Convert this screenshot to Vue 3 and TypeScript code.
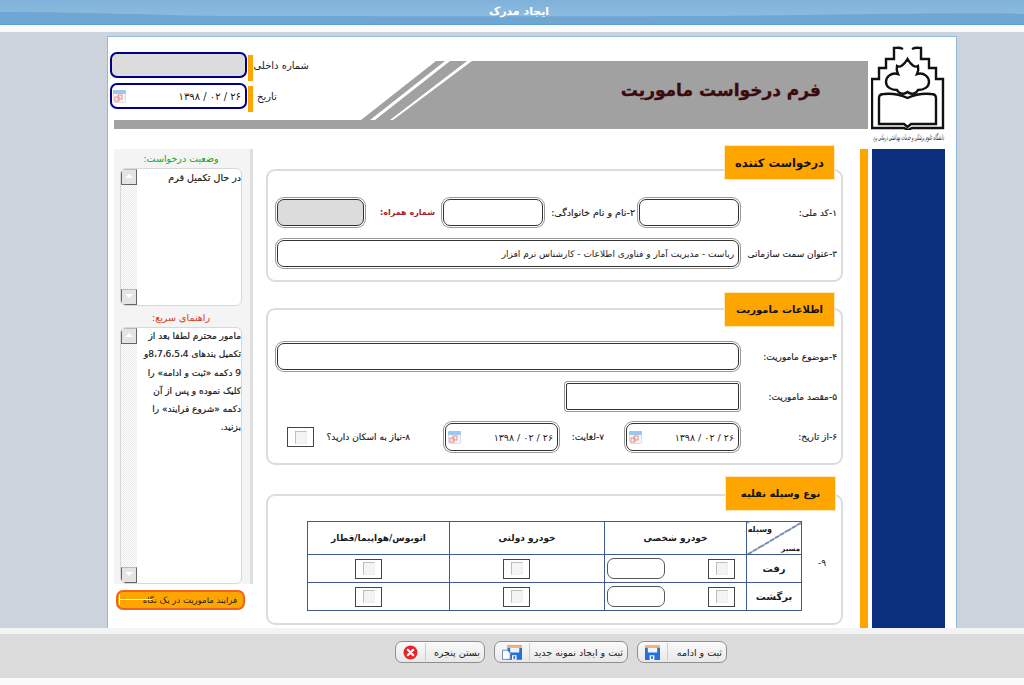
<template>
  <div class="page" dir="rtl">
    <div class="titlebar">
      <svg class="wave" viewBox="0 0 1024 24" preserveAspectRatio="none">
        <path d="M0 12 C100 12 170 16 240 16 C400 16 640 17 800 15 S1000 13 1024 14 V24 H0 Z" fill="#6fa6d2" />
      </svg>
      <span class="title-text">ایجاد مدرک</span>
    </div>
    <div class="gap-strip"></div>

    <div class="desk">
      <div class="panel">
        <div class="head">
          <div class="logo">
            <svg width="74" height="84" viewBox="0 0 74 84" fill="none" stroke="#111" stroke-width="2.4">
              <path d="M32 3 C28 1 26 2 23 2 V13 H15 V22 H8 V33 H1 V82 H33 L37 84 L41 82 H72 V33 H65 V22 H58 V13 H50 V2 C47 2 45 1 41 3" />
              <path d="M36.500 13 C33 19 29 22 26 20 C25 24 26 26 27 28 C20 26 15 31 15 36 C15 41 20 44 26 44 C28 48 33 49 36.500 46 C40 49 45 48 47 44 C53 44 58 41 58 36 C58 31 53 26 46 28 C47 26 48 24 47 20 C44 22 40 19 36.500 13 Z" />
              <path d="M8 78 V52 C8 49 10 48 13 48 C22 47 30 49 36.500 52 C43 49 51 47 60 48 C63 48 65 49 65 52 V78 H40 L36.500 81 L33 78 Z" />
            </svg>
            <div class="logo-caption">دانشگاه علوم پزشکی و خدمات بهداشتی درمانی یزد</div>
          </div>
          <div class="head-main">
            <div class="head-top">
              <div class="banner"><span>فرم درخواست ماموریت</span></div>
              <svg class="slant" width="111" height="59" viewBox="0 0 111 59">
                <path d="M0 59 L75 0 H84 L9 59 Z M14 59 L89 0 H106 L29 59 Z M32 59 L111 0 V59 Z" fill="#a1a1a1" />
              </svg>
              <div class="head-fields">
                <div class="hf-row">
                  <span class="hf-label">شماره داخلی</span>
                  <i class="hf-bar"></i>
                  <div class="hf-input grey"></div>
                </div>
                <div class="hf-row">
                  <span class="hf-label center">تاریخ</span>
                  <i class="hf-bar"></i>
                  <div class="hf-input">
                    <span>{{ today }}</span>
                    <svg class="cal" viewBox="0 0 13 13"><use href="#cal-icon" /></svg>
                  </div>
                </div>
              </div>
            </div>
            <div class="head-strip"></div>
          </div>
        </div>

        <div class="body">
          <div class="navy"></div>
          <div class="orange-bar"></div>

          <div class="main">
            <section class="box box1">
              <h3 class="tab big">درخواست کننده</h3>
              <div class="row r1">
                <label class="l96">۱-کد ملی:</label>
                <input class="inp w104" />
                <label class="l92">۲-نام و نام خانوادگی:</label>
                <input class="inp w104" />
                <label class="mobile">شماره همراه:</label>
                <input class="inp w92 off" />
              </div>
              <div class="row r2">
                <label class="l96">۳-عنوان سمت سازمانی</label>
                <input class="inp w466" value="ریاست - مدیریت آمار و فناوری اطلاعات - کارشناس نرم افزار" />
              </div>
            </section>

            <section class="box box2">
              <h3 class="tab">اطلاعات ماموریت</h3>
              <div class="row r3">
                <label class="l96">۴-موضوع ماموریت:</label>
                <input class="inp w466" />
              </div>
              <div class="row r4">
                <label class="l96">۵-مقصد ماموریت:</label>
                <input class="inp w177 square" />
              </div>
              <div class="row r5">
                <label class="l96">۶-از تاریخ:</label>
                <div class="inp date">
                  <span>{{ today }}</span>
                  <svg class="cal" viewBox="0 0 13 13"><use href="#cal-icon" /></svg>
                </div>
                <label class="l-until">۷-لغایت:</label>
                <div class="inp date">
                  <span>{{ today }}</span>
                  <svg class="cal" viewBox="0 0 13 13"><use href="#cal-icon" /></svg>
                </div>
                <label class="l-stay">۸-نیاز به اسکان دارید؟</label>
                <span class="check"><i></i></span>
              </div>
            </section>

            <section class="box box3">
              <h3 class="tab">نوع وسیله نقلیه</h3>
              <div class="table-row">
                <span class="nine">۹-</span>
                <table class="vehicles">
                  <thead>
                    <tr>
                      <th class="corner">
                        <span class="c-top">وسیله</span>
                        <span class="c-bot">مسیر</span>
                      </th>
                      <th>خودرو شخصی</th>
                      <th>خودرو دولتی</th>
                      <th>اتوبوس/هواپیما/قطار</th>
                    </tr>
                  </thead>
                  <tbody>
                    <tr v-for="r in routes" :key="r">
                      <th class="route">{{ r }}</th>
                      <td>
                        <div class="cell first">
                          <span class="check"><i></i></span>
                          <span class="pill"></span>
                        </div>
                      </td>
                      <td><div class="cell c2"><span class="check"><i></i></span></div></td>
                      <td><div class="cell c3"><span class="check"><i></i></span></div></td>
                    </tr>
                  </tbody>
                </table>
              </div>
            </section>
          </div>

          <aside class="side">
            <div class="side-inner">
              <div class="side-title green">وضعیت درخواست:</div>
              <div class="scrollbox small">
                <div class="sb-text">در حال تکمیل فرم</div>
                <div class="sb-track">
                  <b class="sb-btn up"></b>
                  <b class="sb-btn down"></b>
                </div>
              </div>
              <div class="side-title red">راهنمای سریع:</div>
              <div class="scrollbox large">
                <div class="sb-text guide">
                  <div v-for="l in guide" :key="l">{{ l }}</div>
                </div>
                <div class="sb-track">
                  <b class="sb-btn up"></b>
                  <b class="sb-btn down"></b>
                </div>
              </div>
            </div>
            <button class="flow-btn">فرایند ماموریت در یک نگاه</button>
          </aside>
        </div>
      </div>
    </div>

    <div class="foot-strip"></div>
    <div class="footer">
      <button class="fbtn b1">
        <span>ثبت  و ادامه</span>
        <i class="sep"></i>
        <svg width="15" height="15" viewBox="0 0 16 16"><use href="#floppy" /></svg>
      </button>
      <button class="fbtn b2">
        <span>ثبت و ایجاد نمونه جدید</span>
        <i class="sep"></i>
        <svg width="20" height="15" viewBox="0 0 22 16">
          <use href="#floppy" x="6" />
          <path d="M.5 5.500H6L9 8.500V15.500H.5Z" fill="#fff" stroke="#5f7fae" />
        </svg>
      </button>
      <button class="fbtn b3">
        <span>بستن پنجره</span>
        <i class="sep"></i>
        <svg width="15" height="15" viewBox="0 0 15 15">
          <circle cx="7.500" cy="7.500" r="7" fill="#e2272c" />
          <path d="M4.800 4.800L10.200 10.200M10.200 4.800L4.800 10.200" stroke="#fff" stroke-width="2.200" stroke-linecap="round" />
        </svg>
      </button>
    </div>
    <div class="foot-end"></div>

    <svg width="0" height="0" class="defs">
      <defs>
        <g id="cal-icon">
          <rect x=".5" y=".5" width="12" height="12" rx="1" fill="#f6f6f6" stroke="#d8dde4" />
          <rect x="0" y="0" width="13" height="4" rx="1" fill="#9cc8f0" />
          <rect x="2" y="7" width="4" height="4" fill="none" stroke="#ef8a8a" />
          <rect x="5" y="5" width="4" height="4" fill="none" stroke="#ef8a8a" />
        </g>
        <g id="floppy">
          <path d="M0 0H16V16H0Z" fill="#2470dc" />
          <rect x="0" y="0" width="16" height="3" fill="#f6b86a" />
          <rect x="3" y="3" width="10" height="5" fill="#eef4fc" />
          <rect x="5" y="11" width="5" height="5" fill="#fff" />
          <rect x="6.500" y="12" width="2" height="3" fill="#2470dc" />
        </g>
      </defs>
    </svg>
  </div>
</template>

<script setup lang="ts">
const today: string = '۲۶ / ۰۲ / ۱۳۹۸'
const routes: string[] = ['رفت', 'برگشت']
const guide: string[] = [
  'مامور محترم لطفا بعد از',
  'تکمیل بندهای 4،\u200f5،\u200f6،\u200f7،\u200f8\u200fو',
  '9 دکمه «ثبت و ادامه» را',
  'کلیک نموده و پس از آن',
  'دکمه «شروع فرایند» را',
  'بزنید.',
]
</script>

<style>
html,
body {
  margin: 0;
  background: #fafafa;
}
</style>

<style scoped>
.page {
  width: 1024px;
  height: 685px;
  display: flex;
  flex-direction: column;
  overflow: hidden;
  font-family: "DejaVu Sans", sans-serif;
  font-size: 9px;
  color: #1a1a1a;
  background: #fafafa;
}
.defs {
  position: absolute;
}
.titlebar {
  position: relative;
  height: 25px;
  flex: none;
  box-sizing: border-box;
  border-bottom: 1px solid #5a9fd8;
  background: linear-gradient(#7fb1d9, #8cbade 60%);
  display: flex;
  justify-content: center;
  align-items: center;
}
.wave {
  position: absolute;
  inset: 0;
  width: 100%;
  height: 24px;
}
.title-text {
  position: relative;
  color: #fff;
  font-weight: bold;
  font-size: 11px;
  margin-left: 14px;
  padding-bottom: 2px;
}
.gap-strip {
  height: 7px;
  flex: none;
  background: #fbfafb;
}
.desk {
  flex: 1;
  display: flex;
  background: #cdd3dc;
  padding-top: 4px;
  padding-right: 67px;
  min-height: 0;
}
.panel {
  width: 850px;
  box-sizing: border-box;
  background: #fff;
  border: 1px solid #92bbdb;
  border-bottom: none;
  display: flex;
  flex-direction: column;
}
.head {
  height: 112px;
  flex: none;
  display: flex;
  padding-right: 11px;
  box-sizing: border-box;
}
.logo {
  width: 73px;
  margin-left: 4px;
  padding-top: 9px;
  flex: none;
}
.logo svg {
  display: block;
}
.logo-caption {
  font-size: 8px;
  line-height: 12px;
  white-space: nowrap;
  font-style: italic;
  color: #222;
  margin-top: 2px;
  width: 73px;
  display: flex;
  justify-content: center;
  transform: scaleX(.41);
}
.head-main {
  flex: 1;
  display: flex;
  flex-direction: column;
  padding-left: 2px;
}
.head-top {
  height: 83px;
  display: flex;
  align-items: flex-start;
}
.banner {
  width: 396px;
  height: 59px;
  margin-top: 24px;
  background: #a1a1a1;
  box-sizing: border-box;
  padding-right: 47px;
  padding-bottom: 2px;
  display: flex;
  align-items: center;
  flex: none;
}
.banner span {
  font-size: 17px;
  font-weight: bold;
  -webkit-text-stroke: .35px #3a0a0e;
  color: #3a0a0e;
}
.slant {
  margin-top: 24px;
  flex: none;
}
.head-fields {
  margin-right: auto;
  margin-top: 15px;
  display: flex;
  flex-direction: column;
  gap: 5px;
}
.hf-row {
  display: flex;
  height: 26px;
}
.hf-label {
  width: 56px;
  align-self: center;
  font-size: 10px;
  white-space: nowrap;
}
.hf-label.center {
  text-align: left;
  padding-left: 4px;
  box-sizing: border-box;
  font-size: 10px;
}
.hf-bar {
  width: 5px;
  height: 26px;
  margin-top: 3px;
  margin-left: 1px;
  background: #ffa500;
}
.hf-input {
  width: 137px;
  height: 26px;
  box-sizing: border-box;
  border: 2px solid #00008b;
  border-radius: 7px;
  display: flex;
  align-items: center;
  justify-content: space-between;
  padding: 0 4px 0 1px;
  font-size: 10px;
}
.hf-input.grey {
  background: #dcdcdc;
}
.cal {
  width: 13px;
  height: 13px;
  flex: none;
}
.head-strip {
  height: 9px;
  background: #a1a1a1;
  margin-left: 4px;
}
.body {
  flex: 1;
  display: flex;
  padding-right: 11px;
  min-height: 0;
}
.navy {
  width: 73px;
  flex: none;
  background: #0b2e7d;
}
.orange-bar {
  width: 8px;
  flex: none;
  margin-right: 4px;
  background: #ffa500;
}
.main {
  width: 577px;
  flex: none;
  margin-right: 17px;
  padding-top: 20px;
}
.box {
  position: relative;
  box-sizing: border-box;
  border: 2px solid #dcdcdc;
  border-radius: 9px;
  background: #fff;
}
.box1 {
  height: 113px;
  padding: 26px 4px 0 0;
}
.box2 {
  height: 157px;
  margin-top: 26px;
  padding: 31px 4px 0 0;
}
.box3 {
  height: 131px;
  margin-top: 29px;
  padding-top: 25px;
}
.tab {
  position: absolute;
  top: -25px;
  right: 6px;
  width: 111px;
  height: 35px;
  margin: 0;
  box-sizing: border-box;
  background: #ffa500;
  border: 1px solid #ffe9b8;
  font-size: 10px;
  font-weight: bold;
  color: #111;
  display: flex;
  align-items: center;
  justify-content: center;
}
.tab.big {
  top: -26px;
  font-size: 11.500px;
}
.box2 .tab {
  top: -18px;
}
.box3 .tab {
  top: -20px;
  right: 5px;
}
.row {
  display: flex;
  align-items: center;
}
.r2 {
  margin-top: 10px;
}
.r4 {
  margin-top: 9px;
}
.r5 {
  margin-top: 9px;
}
label {
  font-size: 9px;
  white-space: nowrap;
  -webkit-text-stroke: .15px #1a1a1a;
}
.l96 {
  width: 96px;
  flex: none;
}
.l92 {
  width: 92px;
  padding-right: 2px;
  box-sizing: border-box;
  font-size: 9.500px;
  flex: none;
}
.mobile {
  width: 75px;
  flex: none;
  box-sizing: border-box;
  padding-right: 6px;
  color: #a51f1f;
  -webkit-text-stroke: 0;
  font-weight: bold;
  font-size: 8px;
}
.inp {
  margin: 2px;
  height: 27px;
  box-sizing: border-box;
  border: 1.500px solid #333;
  border-radius: 7px;
  box-shadow: 0 0 0 1px #fff, 0 0 0 2px #999;
  background: #fff;
  outline: none;
  flex: none;
  font-family: inherit;
  font-size: 9px;
  color: #1a1a1a;
  padding: 0 4px;
}
.w104 {
  width: 100px;
}
.w92 {
  width: 87px;
}
.off {
  background: #dcdcdc;
}
.w466 {
  width: 462px;
}
.w177 {
  width: 173px;
}
.square {
  border-radius: 2px;
}
.date {
  width: 113px;
  height: 28px;
  display: flex;
  align-items: center;
  justify-content: space-between;
  font-size: 9.500px;
  padding: 0 4px 0 2px;
}
.l-until {
  width: 64px;
  flex: none;
  box-sizing: border-box;
  padding-right: 20px;
}
.l-stay {
  width: 129px;
  flex: none;
  box-sizing: border-box;
  padding-right: 33px;
}
.check {
  width: 27px;
  height: 20px;
  box-sizing: border-box;
  border: 1.500px solid #444;
  display: flex;
  align-items: center;
  justify-content: center;
  flex: none;
  background: #fff;
}
.check i {
  width: 10px;
  height: 11px;
  background: #f4f4f4;
  border: 1px solid #bdbdbd;
  border-bottom-color: #eee;
  border-right-color: #eee;
}
.table-row {
  position: relative;
  display: flex;
  justify-content: flex-end;
  padding-left: 39px;
}
.nine {
  position: absolute;
  right: 15px;
  top: 37px;
  font-size: 9px;
}
.vehicles {
  width: 494px;
  height: 90px;
  border-collapse: collapse;
  table-layout: fixed;
  border: 1.500px solid #3f5a92;
}
.vehicles th,
.vehicles td {
  border: 1px solid #3f5a92;
  padding: 0;
  font-size: 9px;
  font-weight: bold;
  text-align: center;
  color: #1a1a1a;
}
.vehicles th:nth-child(1) {
  width: 54px;
}
.vehicles th:nth-child(2) {
  width: 141px;
}
.vehicles th:nth-child(3) {
  width: 154px;
}
.vehicles th:nth-child(4) {
  width: 141px;
}
.vehicles tbody tr {
  height: 28px;
}
.vehicles thead tr {
  height: 33px;
}
.vehicles .route {
  font-size: 10px;
}
.vehicles .corner {
  position: relative;
  background: linear-gradient(to top left, transparent calc(50% - .6px), #3f5a92 calc(50% - .6px), #3f5a92 calc(50% + .6px), transparent calc(50% + .6px));
}
.c-top {
  position: absolute;
  top: 3px;
  right: 29px;
  font-size: 8px;
}
.c-bot {
  position: absolute;
  bottom: 1px;
  right: 1px;
  font-size: 7px;
}
.cell {
  display: flex;
  align-items: center;
}
.cell.first {
  justify-content: space-between;
  padding: 0 11px 0 2px;
}
.cell.c2 {
  padding-right: 74px;
}
.cell.c3 {
  padding-right: 67px;
}
.pill {
  width: 58px;
  height: 21px;
  box-sizing: border-box;
  border: 1.500px solid #555;
  border-radius: 7px;
}
.side {
  width: 139px;
  flex: none;
  margin-right: 13px;
  display: flex;
  flex-direction: column;
}
.side-inner {
  height: 435px;
  box-sizing: border-box;
  border-right: 3px solid #dedede;
  background: #f4f4f4;
  padding: 0 8px 0 6px;
  display: flex;
  flex-direction: column;
}
.side-title {
  font-size: 9.500px;
  text-align: center;
  white-space: nowrap;
}
.green {
  height: 19px;
  line-height: 20px;
  color: #14a514;
}
.red {
  height: 21px;
  line-height: 23px;
  color: #d03c14;
}
.scrollbox {
  display: flex;
  box-sizing: border-box;
  background: #fff;
  border: 1px solid #d8d8d8;
  border-radius: 6px;
  overflow: hidden;
}
.small {
  height: 138px;
}
.large {
  height: 257px;
}
.sb-text {
  flex: 1;
  min-width: 0;
  font-size: 9.500px;
  -webkit-text-stroke: .2px #1a1a1a;
  padding: 1px 0 0 0;
  line-height: 16px;
  white-space: nowrap;
}
.guide {
  font-size: 9px;
  line-height: 18.300px;
  padding-top: 0;
  margin-top: -1px;
}
.sb-track {
  width: 16px;
  flex: none;
  display: flex;
  flex-direction: column;
  justify-content: space-between;
  background: repeating-conic-gradient(#e9e9e9 0 25%, #fff 0 50%) 0 0 / 2px 2px;
}
.sb-btn {
  position: relative;
  height: 16px;
  box-sizing: border-box;
  background: #e4e4e4;
  border: 1.500px solid #666;
  border-top-color: #bbb;
}
.sb-btn::after {
  content: "";
  position: absolute;
  left: 3px;
  top: 4px;
  border: 4px solid transparent;
  border-top: 0;
  border-bottom: 4px solid #fff;
}
.sb-btn.down::after {
  border-bottom: 0;
  border-top: 4px solid #fff;
}
.flow-btn {
  position: relative;
  width: 129px;
  height: 20px;
  margin: 6px 8px 0 0;
  box-sizing: border-box;
  background: #ffa500;
  border: 2px solid #f0641e;
  border-radius: 7px;
  font-family: inherit;
  font-size: 8.500px;
  color: #1a1a1a;
  padding: 0 6px 0 0;
  text-align: right;
  white-space: nowrap;
}
.flow-btn::after {
  content: "";
  position: absolute;
  left: 1px;
  top: 2px;
  width: 32px;
  height: 11px;
  border-left: 1px solid #fff;
  background: linear-gradient(transparent 5px, #fff 5px, #fff 6px, transparent 6px);
}
.foot-strip {
  height: 6px;
  flex: none;
  background: #f4f4f4;
}
.footer {
  height: 44px;
  flex: none;
  box-sizing: border-box;
  background: #dcdcdc;
  display: flex;
  gap: 9px;
  padding: 7px 297px 0 0;
}
.foot-end {
  height: 7px;
  flex: none;
  background: #fafafa;
}
.fbtn {
  height: 22px;
  box-sizing: border-box;
  border: 1px solid #8f8f8f;
  border-radius: 7px;
  background: linear-gradient(#fafafa, #e8e8e8);
  display: flex;
  align-items: center;
  padding: 0 4px 0 7px;
  font-family: inherit;
  font-size: 9.500px;
  color: #1a1a1a;
  white-space: pre;
}
.sep {
  width: 1px;
  height: 18px;
  background: #cfcfcf;
  margin: 0 auto 0 7px;
}
.b1 {
  width: 90px;
}
.b2 {
  width: 134px;
}
.b3 {
  width: 90px;
}
</style>
